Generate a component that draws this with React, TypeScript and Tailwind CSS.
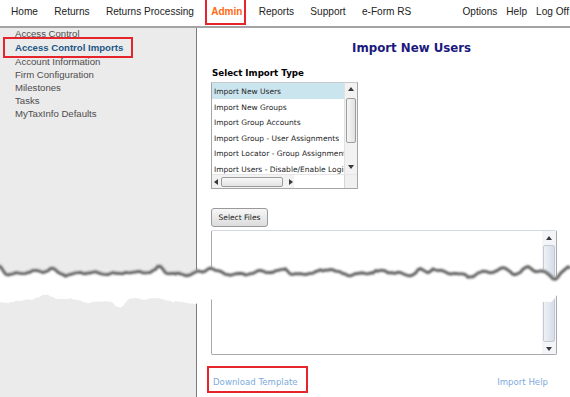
import React from 'react';

const importTypes = [
  'Import New Users',
  'Import New Groups',
  'Import Group Accounts',
  'Import Group - User Assignments',
  'Import Locator - Group Assignments',
  'Import Users - Disable/Enable Login',
];

const sideLinks = ['Account Information', 'Firm Configuration', 'Milestones', 'Tasks', 'MyTaxInfo Defaults'];

// small seeded random so the torn edge stays the same on every render
function makeRng(seed: number) {
  let a = seed;
  return () => {
    a |= 0;
    a = (a + 0x6d2b79f5) | 0;
    let t = Math.imul(a ^ (a >>> 15), 1 | a);
    t = (t + Math.imul(t ^ (t >>> 7), 61 | t)) ^ t;
    return ((t ^ (t >>> 14)) >>> 0) / 4294967296;
  };
}

const bump = (x: number, list: number[][]) =>
  list.reduce((s, [cx, amp, w]) => s + amp * Math.exp(-(((x - cx) / w) ** 2)), 0);

function TornEdge() {
  const r = makeRng(7);
  const topPts: [number, number][] = [];
  const botPts: [number, number][] = [];
  const upTop = [[0, 8, 4], [52, 4, 5], [127, 3, 5], [160, 5, 4], [210, 4, 4], [285, 5, 5], [330, 3, 5], [420, 4, 4], [433, 3, 3], [505, 4, 6], [528, 8, 6], [570, 7, 5]];
  const downTop = [[100, 2, 8], [555, 7, 6], [470, 2, 6]];
  const upBot = [[40, 3, 10], [500, 4, 10], [560, 9, 6], [250, 2, 8]];
  const downBot = [[120, 7, 6], [350, 3, 10], [190, 2, 8]];
  for (let x = -2; x <= 572; x += 2.5) {
    const yt = 271 + 1.6 * Math.sin(x * 0.11 + 0.5) + 1.1 * Math.sin(x * 0.31) + (r() - 0.5) * 1.2 - bump(x, upTop) + bump(x, downTop);
    topPts.push([x, yt]);
    const yb = 300 + 2 * Math.sin(x * 0.07 + 1) + 1 * Math.sin(x * 0.23) + (r() - 0.5) * 1.6 - bump(x, upBot) + bump(x, downBot);
    botPts.push([x, yb]);
  }
  const topLine = topPts.map(([x, y], i) => `${i ? 'L' : 'M'}${x.toFixed(1)} ${y.toFixed(1)}`).join(' ');
  const band =
    topLine +
    ' ' +
    botPts
      .slice()
      .reverse()
      .map(([x, y]) => `L${x.toFixed(1)} ${y.toFixed(1)}`)
      .join(' ') +
    ' Z';
  return (
    <svg className="absolute inset-0 pointer-events-none" width="570" height="397" viewBox="0 0 570 397">
      <defs>
        <filter id="tearBlur" x="-5%" y="-50%" width="110%" height="200%">
          <feGaussianBlur stdDeviation="1.1" />
        </filter>
      </defs>
      <path d={band} fill="#ffffff" />
      <path d={topLine} fill="none" stroke="#454545" strokeWidth="2.8" opacity="0.9" filter="url(#tearBlur)" transform="translate(0 1.9)" />
    </svg>
  );
}

function Tri({ dir }: { dir: 'up' | 'down' | 'left' | 'right' }) {
  const pts = {
    up: '0,4 3,0 6,4',
    down: '0,0 3,4 6,0',
    left: '4,0 0,3 4,6',
    right: '0,0 4,3 0,6',
  }[dir];
  const w = dir === 'up' || dir === 'down' ? 6 : 4;
  const h = dir === 'up' || dir === 'down' ? 4 : 6;
  return (
    <svg width={w} height={h} viewBox={`0 0 ${w} ${h}`}>
      <polygon points={pts} fill="#3a3a3a" />
    </svg>
  );
}

function NavItem({ label }: { label: string }) {
  return <span className="text-[10.1px] text-[#222]">{label}</span>;
}

export default function App() {
  return (
    <div className="relative w-[570px] h-[397px] overflow-hidden bg-white" style={{ fontFamily: '"Liberation Sans", Arial, sans-serif' }}>
      {/* top navigation */}
      <div className="h-[28px] flex items-center pl-[11px] pr-[1px] pb-[2px] border-b-2 border-[#a4a4a4]">
        <div className="flex items-center gap-[16.3px]">
          <NavItem label="Home" />
          <NavItem label="Returns" />
          <NavItem label="Returns Processing" />
          <span className="relative ml-[1px] text-[10px] font-bold text-[#ff6a13]">
            Admin
            <span className="absolute -left-[6px] -right-[4px] -top-[7px] -bottom-[6px] border-2 border-[#e5252b]" />
          </span>
          <NavItem label="Reports" />
          <NavItem label="Support" />
          <NavItem label="e-Form RS" />
        </div>
        <div className="ml-auto flex items-center gap-[9px]">
          <NavItem label="Options" />
          <NavItem label="Help" />
          <NavItem label="Log Off" />
        </div>
      </div>

      <div className="flex h-[369px]">
        {/* sidebar */}
        <div className="w-[197px] shrink-0 bg-[#ebebeb] border-r border-[#7c7c7c] text-[9.6px] leading-[13px] text-[#4d4d4d]">
          <div className="pl-[15px] h-[13px] overflow-hidden">
            <div className="-mt-[1px]">Access Control</div>
          </div>
          <div className="pl-[15px] h-[13.5px] flex items-center">
            <span className="relative font-bold text-[#1d5686]">
              Access Control Imports
              <span className="absolute -left-[12px] -right-[10px] -top-[4px] -bottom-[4px] border-2 border-[#e5252b]" />
            </span>
          </div>
          {sideLinks.map(l => (
            <div key={l} className="pl-[15px] h-[13px]">
              {l}
            </div>
          ))}
        </div>

        {/* main panel */}
        <div className="flex-1 pl-[14px] pt-[12px]" style={{ fontFamily: '"DejaVu Sans", Verdana, sans-serif' }}>
          <div className="pl-[141px] h-[16px] leading-[16px] text-[11.8px] font-bold text-[#1b1a7c]">Import New Users</div>

          <div className="mt-[11px] h-[12px] leading-[12px] pl-[1px] text-[8.7px] font-bold text-black">Select Import Type</div>

          {/* list box */}
          <div className="mt-[3px] w-[147px] h-[107px] border border-[#a6a6a6] border-t-[#c9c9c9] flex flex-col bg-white">
            <div className="flex h-[91px]">
              <div className="w-[132px] overflow-hidden">
                {importTypes.map((t, i) => (
                  <div
                    key={t}
                    className={`h-[15.5px] pt-[2px] pl-[2px] flex items-center whitespace-nowrap text-[7.5px] text-[#1e1e1e] ${i === 0 ? 'bg-[#cbe5ef]' : ''}`}
                  >
                    {t}
                  </div>
                ))}
              </div>
              <div className="w-[13px] ml-auto border-l border-[#e2e2e2] bg-[#f2f2f2] flex flex-col items-center">
                <div className="h-[11px] flex items-center justify-center">
                  <Tri dir="up" />
                </div>
                <div className="mt-[4px] w-[10px] h-[45px] rounded-[2px] border border-[#9c9c9c] bg-gradient-to-r from-[#f6f6f6] to-[#e1e1e1]" />
                <div className="mt-auto mb-[3px] h-[8px] flex items-center justify-center">
                  <Tri dir="down" />
                </div>
              </div>
            </div>
            <div className="flex h-[14px] border-t border-[#e6e6e6] bg-[#f2f2f2]">
              <div className="w-[82px] flex items-center pl-[2px]">
                <Tri dir="left" />
                <div className="ml-[3px] w-[62px] h-[10px] rounded-[2px] border border-[#9c9c9c] bg-gradient-to-b from-[#f8f8f8] to-[#e3e3e3]" />
                <div className="ml-[6px]">
                  <Tri dir="right" />
                </div>
              </div>
              <div className="flex-1 bg-white" />
              <div className="w-[13px] border-l border-[#d6d6d6] bg-[#f0f0f0]" />
            </div>
          </div>

          {/* select files */}
          <button className="mt-[19px] w-[57px] h-[19px] rounded-[3px] border border-[#9a9a9a] bg-gradient-to-b from-[#f7f7f7] to-[#dcdcdc] text-[7.5px] text-[#1a1a1a] flex items-center justify-center">
            Select Files
          </button>

          {/* file area */}
          <div className="mt-[3px] w-[346px] h-[125px] border border-[#a9a9a9] border-t-[#d5dae0] rounded-[2px] flex">
            <div className="flex-1" />
            <div className="w-[14px] bg-[#f3f5f8] flex flex-col items-center">
              <div className="h-[13px] flex items-center justify-center">
                <Tri dir="up" />
              </div>
              <div className="flex-1 w-[12px] my-[1px] rounded-[2px] border border-[#c3cad4] bg-gradient-to-r from-[#eef1f6] to-[#d6dde7]" />
              <div className="h-[11px] flex items-center justify-center">
                <Tri dir="down" />
              </div>
            </div>
          </div>

          {/* links */}
          <div className="mt-[21px] w-[346px] h-[12px] flex items-center text-[8.6px] text-[#7eabdb]">
            <span className="relative ml-[2px]">
              Download Template
              <span className="absolute -left-[6px] -right-[10px] -top-[10px] -bottom-[5px] border-2 border-[#e5252b]" />
            </span>
            <span className="ml-auto mr-[9px]">Import Help</span>
          </div>
        </div>
      </div>

      <TornEdge />
    </div>
  );
}
